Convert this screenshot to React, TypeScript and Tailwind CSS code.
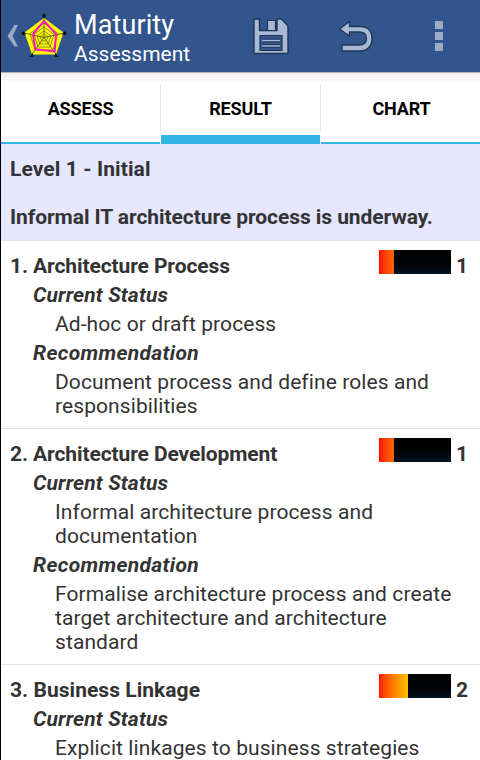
interface Section {
  title: string;
  level: number;
  status: string;
  recommendation?: string;
}

const sections: Section[] = [
  {
    title: '1. Architecture Process',
    level: 1,
    status: 'Ad-hoc or draft process',
    recommendation: 'Document process and define roles and responsibilities',
  },
  {
    title: '2. Architecture Development',
    level: 1,
    status: 'Informal architecture process and documentation',
    recommendation: 'Formalise architecture process and create target architecture and architecture standard',
  },
  {
    title: '3. Business Linkage',
    level: 2,
    status: 'Explicit linkages to business strategies',
  },
];

function SpiderLogo() {
  return (
    <svg className="h-[48px] w-[48px] shrink-0" viewBox="0 0 48 48" fill="none">
      <path d="M24 6 43.500 20.500 36 42.500H12L4.500 20.500Z" fill="#fffb00" />
      <path
        d="M24 11 38 21.500 33 38H15L10 21.500ZM24 15 34 22.500 30 35H18L14 22.500ZM24 19 31 24 28 32H20L17 24ZM24 22 28 25 26 29H22L20 25Z"
        stroke="#77770c"
        strokeWidth=".8"
      />
      <path d="M24 25.500V4M24 25.500 44 21M24 25.500 36.500 43M24 25.500 11.500 43M24 25.500 4 21" stroke="#45451c" strokeWidth=".8" />
      <path d="M24 9 36 22 34.700 39.500 15.300 37.300 13 22Z" stroke="#ff14c0" strokeWidth="2" />
      <path
        d="M23 3 24 2 25 3V5H23ZM44.500 20 46 20.500 45 22.500 43 22ZM35.500 42.500 37.500 44.500 35 44.500ZM12.500 42.500 10.500 44.500 13 44.500ZM3.500 20 2 20.500 3 22.500 5 22Z"
        fill="#101214"
        stroke="#101214"
        strokeWidth="1.200"
      />
    </svg>
  );
}

function ActionBar() {
  return (
    <header className="flex h-[72px] items-center bg-[#31558c] text-white">
      <svg className="ml-[6px] h-[24px] w-[12px] shrink-0" viewBox="0 0 12 24">
        <path d="M7.500 1H11L5.500 12 11 22.500H7.500L.5 12Z" fill="#98aac6" />
      </svg>
      <div className="ml-px flex">
        <SpiderLogo />
      </div>
      <div className="ml-[6px] w-[176px] shrink-0 pt-[6px]">
        <h1 className="text-[27px] leading-[30px] tracking-[.1px]">Maturity</h1>
        <p className="text-[21px] leading-[28px]">Assessment</p>
      </div>
      <svg className="h-[40px] w-[40px] shrink-0" viewBox="0 0 40 40" strokeLinejoin="round">
        <path d="M4 3H9.500V14.500H27V3H31.500L38 10V37.500H4Z" fill="#aab9d3" stroke="#1d3556" strokeWidth="1.4" />
        <path d="M17.500 4.500H25.500V14.500H17.500Z" fill="#aab9d3" stroke="#1d3556" strokeWidth="1.200" />
        <path d="M10 19.500H32V34.500H10Z" fill="#31558c" stroke="#1d3556" strokeWidth="1.200" />
        <path d="M12 24.500H30M12 30H30" stroke="#1d3556" strokeWidth="3.400" />
        <path d="M12 24.500H30M12 30H30" stroke="#aab9d3" strokeWidth="1.700" />
      </svg>
      <svg className="ml-[47px] h-[40px] w-[40px] shrink-0" viewBox="0 0 40 40" strokeLinejoin="round">
        <path
          d="M2.500 13 12.500 5.500V10.500H23C30.500 10.500 35 15 35 22.500S30.500 35 23 35H5V29H22C26.500 29 29.500 27 29.500 22.500S26.500 16 22 16H12.500V20Z"
          fill="#aab9d3"
          stroke="#1d3556"
          strokeWidth="1.300"
        />
      </svg>
      <div className="ml-[58px] flex flex-col gap-[3px]">
        <i className="h-2 w-2 bg-[#9eabc7]" />
        <i className="h-2 w-2 bg-[#9eabc7]" />
        <i className="h-2 w-2 bg-[#9eabc7]" />
      </div>
    </header>
  );
}

function Tabs() {
  return (
    <nav className="flex h-[72px] border-t border-[#b5b3b2] bg-linear-to-b from-[#f3eff0] via-white via-15% to-white text-[18px] font-bold tracking-[-.15px] text-black">
      <button className="w-[159px] border-b-2 border-[#33b5e5] pt-px" type="button">
        ASSESS
      </button>
      <span className="mt-[11px] h-12 w-px bg-[#e5e5e5]" />
      <button className="w-[159px] border-b-[9px] border-[#33b5e5] pt-[8px]" type="button">
        RESULT
      </button>
      <span className="mt-[11px] h-12 w-px bg-[#e5e5e5]" />
      <button className="w-[159px] border-b-2 border-[#33b5e5] pt-px pl-[2px]" type="button">
        CHART
      </button>
    </nav>
  );
}

function LevelMeter({ level }: { level: number }) {
  return (
    <div className="flex shrink-0">
      <div className="-mt-[4px] h-6 w-[72px] bg-linear-to-b from-black to-[#06131f]">
        <div
          className={`h-full ${level === 1 ? 'bg-linear-to-r from-[#ff0000] to-[#ff6500]' : 'bg-linear-to-r from-[#ff0000] to-[#ffc000]'}`}
          style={{ width: level === 1 ? 15 : 29 }}
        />
      </div>
      <span className="w-[29px] pl-[5px] font-bold">{level}</span>
    </div>
  );
}

function SectionRow({ section }: { section: Section }) {
  return (
    <li className="flex flex-col gap-[5px] border-t border-[#e4e4e4] pt-[13px] pb-[10px] last:pb-0">
      <div className="flex justify-between pl-[9px]">
        <h2 className={`font-bold ${section.level === 1 ? 'tracking-[-.1px]' : 'tracking-[.04px]'}`}>{section.title}</h2>
        <LevelMeter level={section.level} />
      </div>
      <h3 className="pl-8 font-bold tracking-[.15px] italic">Current Status</h3>
      <p className="pr-4 pl-[54px] tracking-[.09px]">{section.status}</p>
      {section.recommendation && (
        <>
          <h3 className="pl-8 font-bold tracking-[.33px] italic">Recommendation</h3>
          <p className="pr-4 pl-[54px] tracking-[.09px]">{section.recommendation}</p>
        </>
      )}
    </li>
  );
}

export default function App() {
  return (
    <div className="h-[760px] w-[480px] overflow-hidden border-l border-black bg-white font-['Roboto',sans-serif]">
      <ActionBar />
      <Tabs />
      <main className="text-[21px] leading-6 text-[#333]">
        <div className="flex h-24 flex-col gap-6 bg-[#e6e6ff] pt-[13px] pl-[9px] font-bold">
          <p className="tracking-[.1px]">Level 1 - Initial</p>
          <p className="tracking-[-.07px]">Informal IT architecture process is underway.</p>
        </div>
        <ul>
          {sections.map((section) => (
            <SectionRow key={section.title} section={section} />
          ))}
        </ul>
      </main>
    </div>
  );
}
